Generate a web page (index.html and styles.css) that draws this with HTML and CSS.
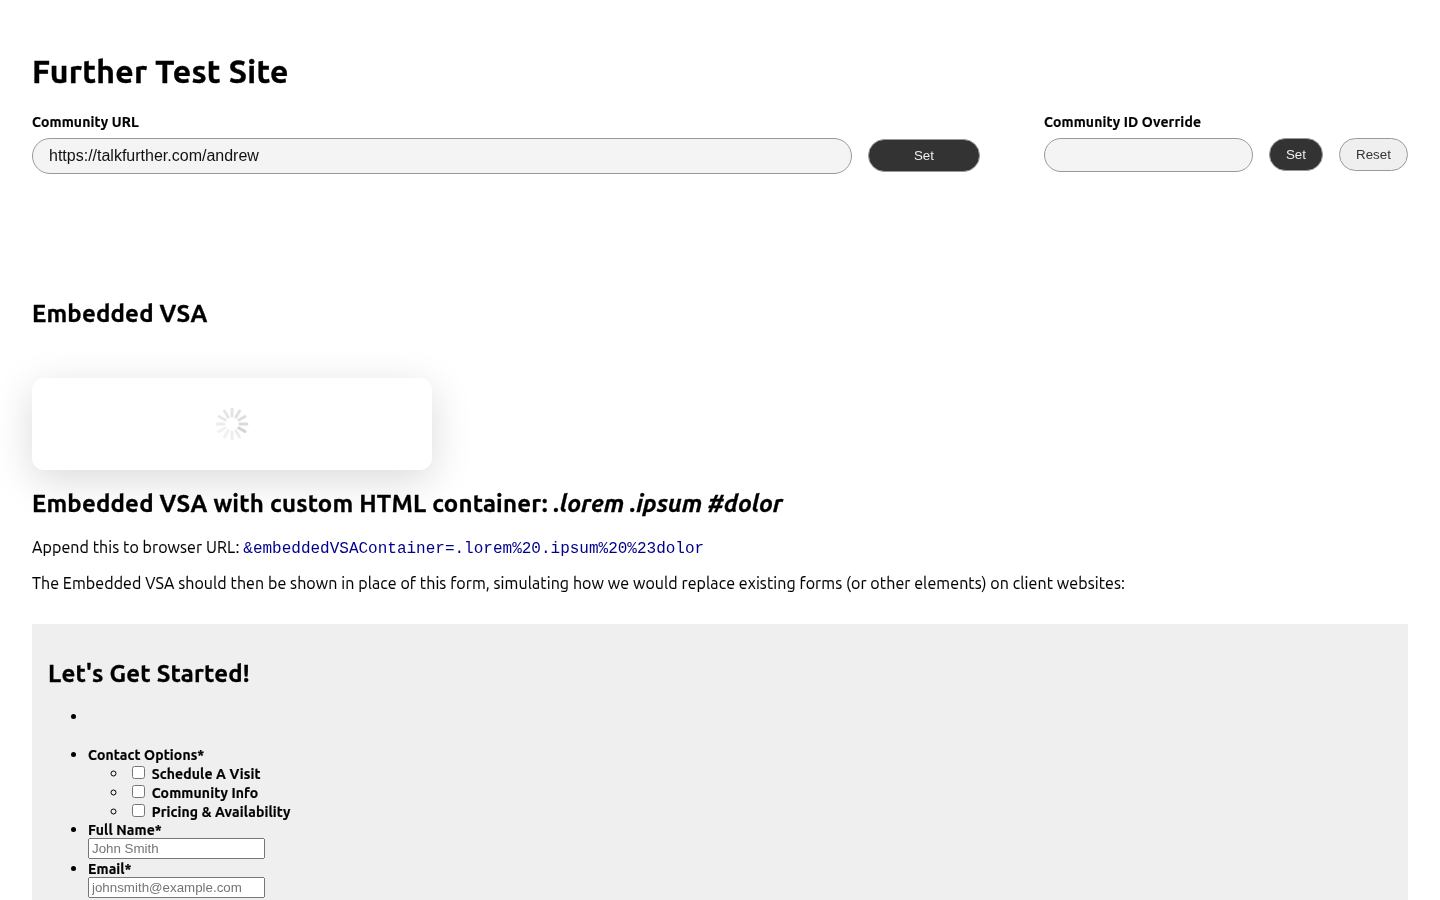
FILE: index.html
```html
<!DOCTYPE html>
<html lang="en">
<head>
<meta charset="utf-8">
<title>Further Test Site</title>
<link rel="stylesheet" href="styles.css">
</head>
<body>
<main class="page">
  <h1 class="site-title">Further Test Site</h1>
  <div class="controls">
    <div class="control control-url">
      <label class="control-label">Community URL</label>
      <div class="control-row">
        <input class="pill-input url-input" type="text" value="https://talkfurther.com/andrew">
        <button class="btn btn-dark btn-wide">Set</button>
      </div>
    </div>
    <div class="control control-id">
      <label class="control-label">Community ID Override</label>
      <div class="control-row">
        <input class="pill-input id-input" type="text">
        <button class="btn btn-dark btn-small">Set</button>
        <button class="btn btn-light">Reset</button>
      </div>
    </div>
  </div>

  <h2 class="section-title first-section">Embedded VSA</h2>
  <div class="vsa-card">
    <svg class="spinner" width="34" height="34" viewBox="0 0 34 34" aria-hidden="true">
      <g stroke="#d2d2d2" stroke-width="3" stroke-linecap="round">
        <line x1="17" y1="2" x2="17" y2="9" opacity=".62"/>
        <line x1="24.5" y1="4" x2="21" y2="10.1" opacity=".66"/>
        <line x1="30" y1="9.5" x2="23.9" y2="13" opacity=".72"/>
        <line x1="32" y1="17" x2="25" y2="17" opacity=".8"/>
        <line x1="30" y1="24.5" x2="23.9" y2="21" opacity=".95"/>
        <line x1="24.5" y1="30" x2="21" y2="23.9" opacity=".4"/>
        <line x1="17" y1="32" x2="17" y2="25" opacity=".36"/>
        <line x1="9.5" y1="30" x2="13" y2="23.9" opacity=".32"/>
        <line x1="4" y1="24.5" x2="10.1" y2="21" opacity=".3"/>
        <line x1="2" y1="17" x2="9" y2="17" opacity=".42"/>
        <line x1="4" y1="9.5" x2="10.1" y2="13" opacity=".5"/>
        <line x1="9.5" y1="4" x2="13" y2="10.1" opacity=".56"/>
      </g>
    </svg>
  </div>

  <h2 class="section-title">Embedded VSA with custom HTML container: <em class="selector">.lorem .ipsum #dolor</em></h2>
  <p class="copy">Append this to browser URL: <code>&amp;embeddedVSAContainer=.lorem%20.ipsum%20%23dolor</code></p>
  <p class="copy">The Embedded VSA should then be shown in place of this form, simulating how we would replace existing forms (or other elements) on client websites:</p>

  <section class="form-panel">
    <h2 class="panel-title">Let's Get Started!</h2>
    <ul class="form-list">
      <li class="empty-item"></li>
      <li>
        <label class="field-label">Contact Options*</label>
        <ul>
          <li><input type="checkbox"> <label class="field-label">Schedule A Visit</label></li>
          <li><input type="checkbox"> <label class="field-label">Community Info</label></li>
          <li><input type="checkbox"> <label class="field-label">Pricing &amp; Availability</label></li>
        </ul>
      </li>
      <li>
        <label class="field-label">Full Name*</label><br>
        <input class="text-field" type="text" placeholder="John Smith">
      </li>
      <li>
        <label class="field-label">Email*</label><br>
        <input class="text-field" type="text" placeholder="johnsmith@example.com">
      </li>
    </ul>
  </section>
</main>
</body>
</html>
```

FILE: styles.css
```css
* { box-sizing: border-box; }
html, body { margin: 0; background: #fff; }
body {
  font-family: "Ubuntu", "Noto Sans", "Open Sans", sans-serif;
  font-size: 16px;
  color: #000;
}
.page { padding: 52px 32px 0; will-change: opacity; }
.site-title { margin: 0 0 24px; font-size: 32px; line-height: 38px; font-weight: 700; letter-spacing: .3px; -webkit-text-stroke: .4px #000; }
.controls { display: flex; justify-content: space-between; align-items: flex-start; }
.control-label { display: block; font-size: 14px; line-height: 16px; font-weight: 700; margin-bottom: 8px; letter-spacing: .12px; -webkit-text-stroke: .2px #000; }
.control-row { display: flex; align-items: flex-start; gap: 16px; }
.pill-input {
  font-family: "Liberation Sans", Arial, sans-serif;
  font-size: 16px;
  color: #111;
  background: #f4f4f4;
  border: 1px solid #999;
  border-radius: 18px;
  padding: 0 16px;
  outline: 0;
}
.url-input { width: 820px; height: 36px; }
.id-input { width: 209px; height: 34px; }
.btn {
  font-family: "Liberation Sans", Arial, sans-serif;
  font-size: 13.33px;
  height: 33px;
  border-radius: 17px;
  border: 1px solid #999;
  padding: 0;
}
.btn-dark { background: #333; color: #eee; }
.btn-light { background: #efefef; color: #333; width: 69px; }
.btn-wide { width: 112px; margin-top: 1px; }
.btn-small { width: 54px; }
.section-title { margin: 0; font-size: 24px; line-height: 28px; font-weight: 700; letter-spacing: .2px; -webkit-text-stroke: .3px #000; }
.selector { letter-spacing: -.03px; }
.first-section { margin-top: 126px; }
.vsa-card {
  width: 400px;
  height: 92px;
  margin: 50px 0 20px;
  background: #fff;
  border-radius: 12px;
  box-shadow: 0 10px 40px rgba(0, 0, 0, .15);
  display: flex;
  align-items: center;
  justify-content: center;
}
.copy { margin: 19px 0 0; line-height: 20px; letter-spacing: .085px; -webkit-text-stroke: .1px #000; }
.copy + .copy { margin-top: 14px; }
code { font-family: "Liberation Mono", monospace; color: #00008b; font-size: 16px; letter-spacing: 0; -webkit-text-stroke: 0; }
.form-panel { margin-top: 31px; padding: 16px 16px 60px; background: #efefef; }
.panel-title { margin: 20px 0 16px; font-size: 24px; line-height: 28px; font-weight: 700; letter-spacing: .2px; -webkit-text-stroke: .3px #000; }
.form-list { margin: 19px 0 16px; padding-left: 40px; }
.form-list ul { margin: 0; padding-left: 40px; }
.field-label { font-size: 14px; font-weight: 700; letter-spacing: .12px; -webkit-text-stroke: .2px #000; }
.empty-item { min-height: 38px; }
.text-field { width: 177px; }
```
